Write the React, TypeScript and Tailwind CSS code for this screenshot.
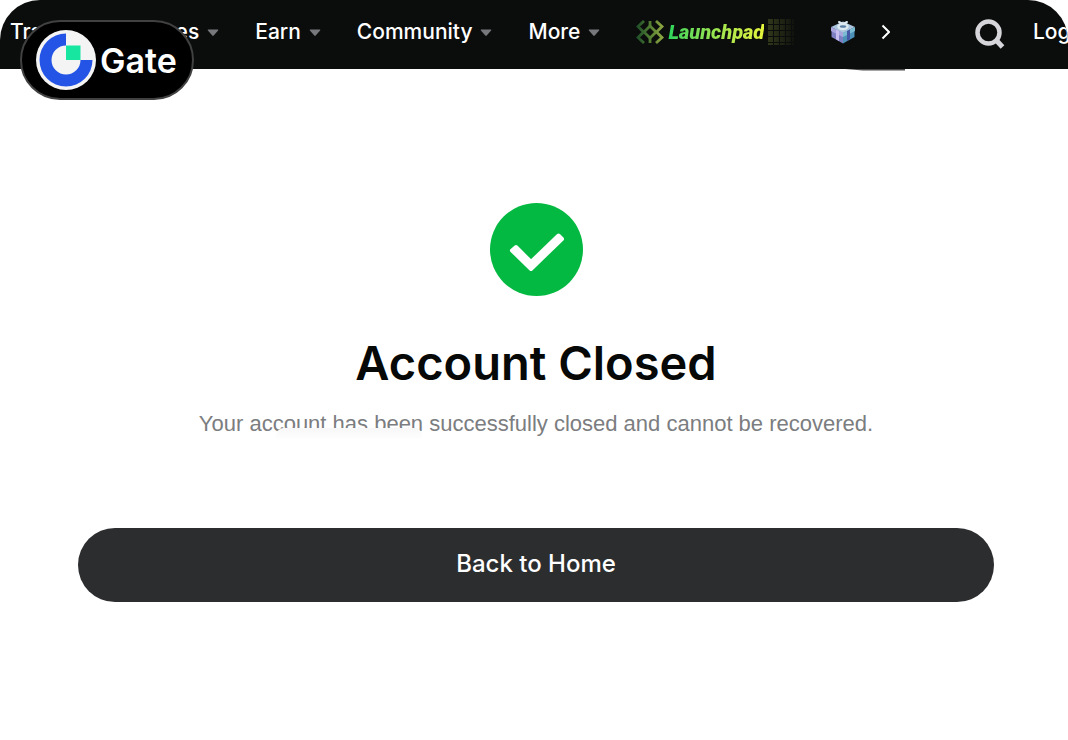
import React from "react";

const navItems = ["Trade", "Futures", "Earn", "Community", "More"];

const Caret = () => (
  <svg width="12" height="8" viewBox="0 0 12 8" className="mt-0.5 fill-[#77787b]" aria-hidden="true">
    <path d="M1.4 0.5h9.2c.6 0 .9.6.5 1L6.7 6.6a1 1 0 0 1-1.4 0L.9 1.5c-.4-.4-.1-1 .5-1z" />
  </svg>
);

const GateLogo = () => (
  <svg width="60" height="60" viewBox="0 0 60 60" aria-hidden="true">
    <circle cx="30" cy="30" r="30" fill="#f4f4f5" />
    <path d="M30 3.5A26.5 26.5 0 1 0 56.5 30H44.5A14.5 14.5 0 1 1 30 15.5z" fill="#2354e6" />
    <path d="M30 15.5h14.5V30H30z" fill="#17e6a1" />
  </svg>
);

const LaunchIcon = () => (
  <svg width="28" height="24" viewBox="0 0 28 24" fill="none" stroke="url(#launch)" strokeWidth="2.8" aria-hidden="true">
    <defs>
      <linearGradient id="launch" x1="0" y1="0" x2="28" y2="0" gradientUnits="userSpaceOnUse">
        <stop stopColor="#1a4a28" />
        <stop offset="0.5" stopColor="#527d32" />
        <stop offset="1" stopColor="#94ab42" />
      </linearGradient>
    </defs>
    <path d="M14 6 20 12 14 18 8 12z" />
    <path d="M14 1v5M14 18v5" />
    <path d="M8 1 2 6.5 7.5 12 2 17.5 8 23" />
    <path d="M20 1 26 6.5 20.500 12 26 17.5 20 23" />
  </svg>
);

const DotGrid = () => (
  <svg width="26" height="26" viewBox="0 0 26 26" aria-hidden="true">
    <defs>
      <linearGradient id="fade">
        <stop stopColor="#4a5524" stopOpacity="0.6" />
        <stop offset="1" stopColor="#4a5524" stopOpacity="0.1" />
      </linearGradient>
      <pattern id="cells" width="6" height="6" patternUnits="userSpaceOnUse">
        <path d="M0 0h5v5H0z" fill="#fff" />
      </pattern>
      <mask id="grid">
        <path d="M0 0h26v26H0z" fill="url(#cells)" />
      </mask>
    </defs>
    <path d="M0 0h26v26H0z" fill="url(#fade)" mask="url(#grid)" />
  </svg>
);

const GiftIcon = () => (
  <svg width="26" height="24" viewBox="0 0 26 24" aria-hidden="true">
    <path d="M13 11 1.5 8v9L13 23.5z" fill="#7f80c4" />
    <path d="M13 11 24.5 8v9L13 23.5z" fill="#4c91b8" />
    <path d="M1 7 13 1.5 25 7l-12 6z" fill="#a9c4dc" />
    <path d="M1 7l12 6v4L1 11z" fill="#a9a5df" />
    <path d="M25 7l-12 6v4l12-6z" fill="#7cbcd2" />
    <path d="M6 9.5l3 1.5v10l-3-1.7z" fill="#c7bdf0" />
    <path d="M20 9.5 17 11v10l3-1.7z" fill="#4657a5" />
    <ellipse cx="13" cy="6.5" rx="4.5" ry="2.5" fill="#5d7fa6" stroke="#dce9f1" strokeWidth="2.5" />
    <path d="M9 2l3 1.500M17 2 14 3.5" stroke="#dce9f1" strokeWidth="2" strokeLinecap="round" />
  </svg>
);

const SearchIcon = () => (
  <svg width="30" height="30" viewBox="0 0 30 30" fill="none" stroke="#d6d5d9" strokeWidth="4.5" aria-hidden="true">
    <circle cx="13.5" cy="13.5" r="11" />
    <path d="M21.5 21.5l6 6.5" strokeWidth="5" />
  </svg>
);

const CheckIcon = () => (
  <svg width="93" height="93" viewBox="0 0 93 93" aria-hidden="true">
    <circle cx="46.5" cy="46.5" r="46.5" fill="#03b941" />
    <path
      d="M22 47.5 26 44 41 59 68.500 32.5 72 36 41 66z"
      fill="#fff"
      stroke="#fff"
      strokeWidth="4"
      strokeLinejoin="round"
    />
  </svg>
);

const Header = () => (
  <header className="flex h-[69px] items-start overflow-hidden rounded-t-[40px] bg-[#0b0c0c] pl-2.5 pt-4 text-white">
    <nav className="flex h-8 shrink-0 items-center gap-9">
      {navItems.map((item) => (
        <button key={item} className="flex items-center gap-2 text-[21px] leading-8 font-medium">
          {item}
          <Caret />
        </button>
      ))}
      <a href="#launchpad" className="flex items-center gap-1">
        <LaunchIcon />
        <span className="bg-linear-to-r from-[#24d45b] to-[#e4f43b] bg-clip-text font-[Roboto] text-xl leading-8 font-black text-transparent italic">
          Launchpad
        </span>
        <DotGrid />
      </a>
      <a href="#rewards" aria-label="Rewards">
        <GiftIcon />
      </a>
    </nav>
    <button aria-label="More links" className="ml-6 flex h-8 shrink-0 items-center">
      <svg width="10" height="16" viewBox="0 0 10 16" fill="none" stroke="#fff" strokeWidth="2" aria-hidden="true">
        <path d="M2.5 1.5 9 8l-6.5 6.5" />
      </svg>
    </button>
    <div className="ml-auto flex h-8 w-[93px] shrink-0 items-center gap-7">
      <button aria-label="Search" className="mt-1 shrink-0">
        <SearchIcon />
      </button>
      <a href="#login" className="text-[21px] leading-8 font-medium whitespace-nowrap">
        Log In
      </a>
    </div>
  </header>
);

const App = () => {
  return (
    <div className="relative min-h-screen bg-white font-[Inter,sans-serif]">
      <Header />
      <svg width="60" height="2" viewBox="0 0 60 2" className="absolute top-[69px] right-[163px]" aria-hidden="true">
        <path d="M0 0h60v1.5H18z" fill="#4b4b4b" />
      </svg>
      <div className="absolute top-5 left-5 flex h-20 w-[174px] items-center gap-1 rounded-full border-2 border-[#414141] bg-black pl-3.5 text-white">
        <GateLogo />
        <span className="pt-0.5 text-[34px] leading-10 font-semibold">Gate</span>
      </div>
      <main className="flex flex-col items-center pt-[134px] pr-[74px] pl-[78px]">
        <CheckIcon />
        <h1 className="mt-9 text-[47px] leading-[62px] font-semibold text-[#070808]">Account Closed</h1>
        <p className="relative mt-3.5 font-['Liberation_Sans',sans-serif] text-[22px] leading-8 text-[#7b7d80]">
          Your account has been successfully closed and cannot be recovered.
          <span className="absolute top-5 left-[77px] h-3 w-[146px] rounded-t-lg bg-linear-to-b from-[#f7f7f7] to-white" />
        </p>
        <button className="mt-[88px] h-[74px] w-full rounded-full bg-[#2c2d2f] pb-0.5 text-2xl font-medium text-white">
          Back to Home
        </button>
      </main>
    </div>
  );
};

export default App;
